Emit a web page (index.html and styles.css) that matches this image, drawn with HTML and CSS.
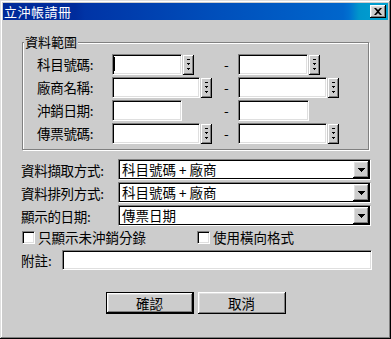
FILE: index.html
```html
<!DOCTYPE html>
<html lang="zh-Hant">
<head>
<meta charset="utf-8">
<title>立沖帳請冊</title>
<link rel="stylesheet" href="styles.css">
</head>
<body>
<div class="window">
  <div class="titlebar">
    <span class="title">立沖帳請冊</span>
    <span class="close"><svg width="8" height="7" viewBox="0 0 8 7"><path d="M0 0h2l2 2 2-2h2L5 3.5 8 7H6L4 5 2 7H0l3-3.5z" fill="#000"/></svg></span>
  </div>
  <div class="body">
    <fieldset class="group">
      <legend>資料範圍</legend>
      <div class="range">
        <span class="rlabel">科目號碼:</span>
        <div class="field"><div class="tb w70"><span class="caret"></span></div><span class="spin"><svg width="11" height="20" viewBox="0 0 11 20"><path d="M4 4h3v1H4zM4 8h3v1H4zM5 9h1v1H5zM4 13h3v1H4zM5 14h1v1H5z" fill="#000"/></svg></span></div>
        <span class="dash">-</span>
        <div class="field"><div class="tb w70"></div><span class="spin"><svg width="11" height="20" viewBox="0 0 11 20"><path d="M4 4h3v1H4zM4 8h3v1H4zM5 9h1v1H5zM4 13h3v1H4zM5 14h1v1H5z" fill="#000"/></svg></span></div>

        <span class="rlabel">廠商名稱:</span>
        <div class="field"><div class="tb w88"></div><span class="spin"><svg width="11" height="20" viewBox="0 0 11 20"><path d="M4 4h3v1H4zM4 8h3v1H4zM5 9h1v1H5zM4 13h3v1H4zM5 14h1v1H5z" fill="#000"/></svg></span></div>
        <span class="dash">-</span>
        <div class="field"><div class="tb w89"></div><span class="spin"><svg width="11" height="20" viewBox="0 0 11 20"><path d="M4 4h3v1H4zM4 8h3v1H4zM5 9h1v1H5zM4 13h3v1H4zM5 14h1v1H5z" fill="#000"/></svg></span></div>

        <span class="rlabel">沖銷日期:</span>
        <div class="field"><div class="tb w70"></div></div>
        <span class="dash">-</span>
        <div class="field"><div class="tb w71"></div></div>

        <span class="rlabel">傳票號碼:</span>
        <div class="field"><div class="tb w88"></div><span class="spin"><svg width="11" height="20" viewBox="0 0 11 20"><path d="M4 4h3v1H4zM4 8h3v1H4zM5 9h1v1H5zM4 13h3v1H4zM5 14h1v1H5z" fill="#000"/></svg></span></div>
        <span class="dash">-</span>
        <div class="field"><div class="tb w89"></div><span class="spin"><svg width="11" height="20" viewBox="0 0 11 20"><path d="M4 4h3v1H4zM4 8h3v1H4zM5 9h1v1H5zM4 13h3v1H4zM5 14h1v1H5z" fill="#000"/></svg></span></div>
      </div>
    </fieldset>

    <div class="opts">
      <div class="opt-row">
        <span class="olabel">資料擷取方式:</span>
        <div class="combo"><span class="ctext">科目號碼 + 廠商</span><span class="cbtn"><svg width="7" height="4" viewBox="0 0 7 4"><path d="M0 0h7v1H0zM1 1h5v1H1zM2 2h3v1H2zM3 3h1v1H3z" fill="#000"/></svg></span></div>
      </div>
      <div class="opt-row">
        <span class="olabel">資料排列方式:</span>
        <div class="combo"><span class="ctext">科目號碼 + 廠商</span><span class="cbtn"><svg width="7" height="4" viewBox="0 0 7 4"><path d="M0 0h7v1H0zM1 1h5v1H1zM2 2h3v1H2zM3 3h1v1H3z" fill="#000"/></svg></span></div>
      </div>
      <div class="opt-row">
        <span class="olabel">顯示的日期:</span>
        <div class="combo"><span class="ctext">傳票日期</span><span class="cbtn"><svg width="7" height="4" viewBox="0 0 7 4"><path d="M0 0h7v1H0zM1 1h5v1H1zM2 2h3v1H2zM3 3h1v1H3z" fill="#000"/></svg></span></div>
      </div>
    </div>

    <div class="checks">
      <label class="check first"><span class="box"></span><span>只顯示未沖銷分錄</span></label>
      <label class="check"><span class="box"></span><span>使用橫向格式</span></label>
    </div>

    <div class="note-row">
      <span class="nlabel">附註:</span>
      <div class="tb note"></div>
    </div>

    <div class="buttons">
      <span class="btn default">確認</span>
      <span class="btn">取消</span>
    </div>
  </div>
</div>
</body>
</html>
```

FILE: styles.css
```css
html, body {
  margin: 0;
  padding: 0;
}
body {
  width: 391px;
  height: 339px;
  background: #cccccc;
  font-family: "Noto Sans CJK TC", "Noto Sans CJK SC", sans-serif;
  font-size: 13.5px;
  color: #000;
  overflow: hidden;
}
.window {
  box-sizing: border-box;
  width: 391px;
  height: 339px;
  padding: 3px;
  background: #cccccc;
  box-shadow: inset -1px -1px #000, inset 1px 1px #dfdfdf, inset -2px -2px #808080, inset 2px 2px #fff;
  display: flex;
  flex-direction: column;
}
.titlebar {
  height: 17px;
  flex: none;
  display: flex;
  align-items: center;
  justify-content: space-between;
  padding: 0 2px 0 1px;
  background: linear-gradient(to right, #002a9a 0, #002c9c 72px, #0034a6 82px, #0050bc 220px, #0066cc 340px, #0070d0 346px, #0096cc 356px, #00a2d2 100%);
  color: #fff;
  font-size: 13px;
  line-height: 17px;
}
.title {
  letter-spacing: 0.5px;
}
.close {
  width: 16px;
  height: 13px;
  background: #cccccc;
  box-shadow: inset -1px -1px #000, inset 1px 1px #fff, inset -2px -2px #808080, inset 2px 2px #dfdfdf;
  display: flex;
  align-items: center;
  justify-content: center;
}
.body {
  padding-left: 18px;
  display: flex;
  flex-direction: column;
}
.group {
  margin: 15px 0 0 1px;
  padding: 0;
  width: 347px;
  min-width: 0;
  box-sizing: border-box;
  border: 1px solid #808080;
  box-shadow: inset 1px 1px #fff, 1px 1px #fff;
}
.group legend {
  margin-left: 1px;
  padding: 0 1px;
  line-height: 14px;
  background: #cccccc;
  font-size: 13px;
}
.range {
  padding: 5px 0 5px 14px;
  display: grid;
  grid-template-columns: 75px 111px 15px auto;
  grid-auto-rows: 21px;
  row-gap: 2px;
  align-items: center;
}
.rlabel {
  line-height: 21px;
  letter-spacing: -0.3px;
}
.dash {
  line-height: 21px;
  padding-left: 1px;
}
.field {
  display: flex;
  gap: 1px;
  height: 21px;
  align-items: flex-start;
}
.tb {
  box-sizing: border-box;
  height: 21px;
  background: #fff;
  border-top: 1px solid #808080;
  border-left: 1px solid #808080;
  border-bottom: 1px solid #fff;
  border-right: 1px solid #fff;
  box-shadow: inset 1px 1px #000, inset -1px -1px #dfdfdf;
}
.w70 { width: 70px; }
.w71 { width: 71px; }
.w88 { width: 88px; }
.w89 { width: 89px; }
.caret {
  display: block;
  width: 1px;
  height: 14px;
  margin: 2px 0 0 1px;
  background: #000;
}
.spin {
  width: 11px;
  height: 20px;
  margin-top: 1px;
  background: #cccccc;
  box-shadow: inset -1px -1px #000, inset 1px 1px #fff, inset -2px -2px #808080;
  display: block;
}
.spin svg {
  display: block;
}
.opts {
  margin-top: 9px;
  display: flex;
  flex-direction: column;
  gap: 2px;
}
.opt-row {
  display: flex;
  align-items: center;
  height: 21px;
}
.olabel {
  width: 97px;
  flex: none;
  letter-spacing: -0.3px;
}
.combo {
  box-sizing: border-box;
  width: 253px;
  height: 21px;
  background: #fff;
  border-top: 1px solid #808080;
  border-left: 1px solid #808080;
  border-bottom: 1px solid #fff;
  border-right: 1px solid #fff;
  box-shadow: inset 1px 1px #000, inset -1px -1px #000;
  padding: 1px 1px 1px 3px;
  display: flex;
  align-items: center;
  justify-content: space-between;
}
.ctext {
  line-height: 17px;
  white-space: pre;
}
.cbtn {
  width: 16px;
  height: 17px;
  background: #cccccc;
  box-shadow: inset -1px -1px #000, inset 1px 1px #fff, inset -2px -2px #808080, inset 2px 2px #dfdfdf;
  display: flex;
  align-items: center;
  justify-content: center;
}
.checks {
  margin-top: 5px;
  display: flex;
  height: 13px;
  align-items: center;
}
.check {
  display: flex;
  align-items: center;
  gap: 3px;
  line-height: 13px;
}
.check.first {
  width: 175px;
  margin-left: 1px;
}
.box {
  box-sizing: border-box;
  width: 13px;
  height: 13px;
  flex: none;
  background: #fff;
  border-top: 1px solid #808080;
  border-left: 1px solid #808080;
  border-bottom: 1px solid #fff;
  border-right: 1px solid #fff;
  box-shadow: inset 1px 1px #000, inset -1px -1px #dfdfdf;
}
.note-row {
  margin-top: 6px;
  display: flex;
  align-items: center;
  height: 20px;
}
.nlabel {
  width: 41px;
  flex: none;
}
.tb.note {
  width: 310px;
  height: 20px;
}
.buttons {
  margin: 22px 0 0 -18px;
  display: flex;
  justify-content: center;
  gap: 4px;
}
.btn {
  box-sizing: border-box;
  width: 88px;
  height: 22px;
  background: #cccccc;
  box-shadow: inset -1px -1px #000, inset 1px 1px #fff, inset -2px -2px #808080, inset 2px 2px #dfdfdf;
  display: flex;
  align-items: center;
  justify-content: center;
  line-height: 14px;
}
.btn.default {
  border: 1px solid #000;
}
```
